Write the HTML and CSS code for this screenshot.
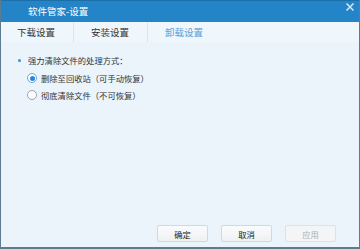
FILE: index.html
```html
<!DOCTYPE html>
<html lang="zh-CN">
<head>
    <meta charset="UTF-8">
    <title>软件管家-设置</title>
    <link rel="stylesheet" href="styles.css">
</head>
<body>

<div class="window">
    <!-- Barra de título -->
    <div class="titlebar">
        <span class="title">软件管家-设置</span>
        <svg class="close" width="8" height="8" viewBox="0 0 8 8">
            <path d="M0.5 0.5 L7.5 7.5 M7.5 0.5 L0.5 7.5" stroke="#dbe8f4" stroke-width="1.5"/>
        </svg>
    </div>

    <!-- Pestañas -->
    <div class="tabs">
        <a href="#" class="tab">下载设置</a>
        <span class="sep"></span>
        <a href="#" class="tab">安装设置</a>
        <span class="sep"></span>
        <a href="#" class="tab active">卸载设置</a>
    </div>

    <!-- Contenido -->
    <div class="content">
        <div class="option-title"><span class="dot"></span>强力清除文件的处理方式：</div>
        <label class="radio-row"><span class="radio checked"></span>删除至回收站（可手动恢复）</label>
        <label class="radio-row"><span class="radio"></span>彻底清除文件（不可恢复）</label>
    </div>

    <div class="footer">
        <button class="btn">确定</button>
        <button class="btn">取消</button>
        <button class="btn" disabled>应用</button>
    </div>
</div>

</body>
</html>
```

FILE: styles.css
```css
* {
    box-sizing: border-box;
}

body {
    font-family: "Noto Sans CJK SC", "Noto Sans", sans-serif;
    margin: 0;
    padding: 0;
    width: 360px;
    height: 249px;
    overflow: hidden;
    text-spacing-trim: space-all;
}

.window {
    display: flex;
    flex-direction: column;
    height: 249px;
    border-left: 1px solid #5d7c90;
    border-right: 1px solid #5d7c90;
    border-bottom: 2px solid #5d7c90;
    background-color: #ebf3fb;
}

.titlebar {
    display: flex;
    align-items: center;
    justify-content: space-between;
    height: 22px;
    padding: 0 5px 1px 27px;
    background-color: #2384c7;
    border-top: 1px solid #1d6fa8;
    color: #ffffff;
    font-size: 9.5px;
}

.close {
    margin-bottom: 8px;
}

.tabs {
    display: flex;
    align-items: center;
    height: 20px;
    background-color: #eff6fc;
    padding-left: 16px;
}

.tab {
    text-decoration: none;
    color: #333;
    font-size: 9.5px;
    line-height: 20px;
}

.tab.active {
    color: #5a9fd8;
}

.sep {
    width: 1px;
    height: 20px;
    background-color: #dde4ea;
    margin: 0 17px 0 18px;
}

.content {
    flex: 1;
    padding: 12px 0 0 17px;
    font-size: 8.3px;
    color: #333;
}

.option-title {
    display: flex;
    align-items: center;
    height: 12px;
}

.dot {
    width: 3px;
    height: 3px;
    border-radius: 50%;
    background-color: #3a8fd6;
    margin-right: 7px;
}

.radio-row {
    display: flex;
    align-items: center;
    height: 16.5px;
    margin-left: 9px;
}

.radio-row:first-of-type {
    margin-top: 4px;
}

.radio {
    width: 10px;
    height: 10px;
    border-radius: 50%;
    border: 1px solid #9aa5ae;
    background-color: #ffffff;
    margin-right: 4px;
    position: relative;
}

.radio.checked {
    border-color: #6aa8dc;
}

.radio.checked::after {
    content: "";
    position: absolute;
    left: 1.5px;
    top: 1.5px;
    width: 5px;
    height: 5px;
    border-radius: 50%;
    background-color: #2a86d8;
}

.footer {
    display: flex;
    justify-content: flex-end;
    gap: 13px;
    padding: 0 23px 5px 0;
}

.btn {
    width: 51px;
    height: 17px;
    padding: 0;
    font-family: inherit;
    font-size: 8.3px;
    color: #222;
    background: linear-gradient(#fafbfc, #eef1f3);
    border: 1px solid #d2d8dd;
    border-radius: 2px;
}

.btn:disabled {
    color: #a9b1b8;
    background: #f3f5f7;
    border-color: #dde2e6;
}
```
